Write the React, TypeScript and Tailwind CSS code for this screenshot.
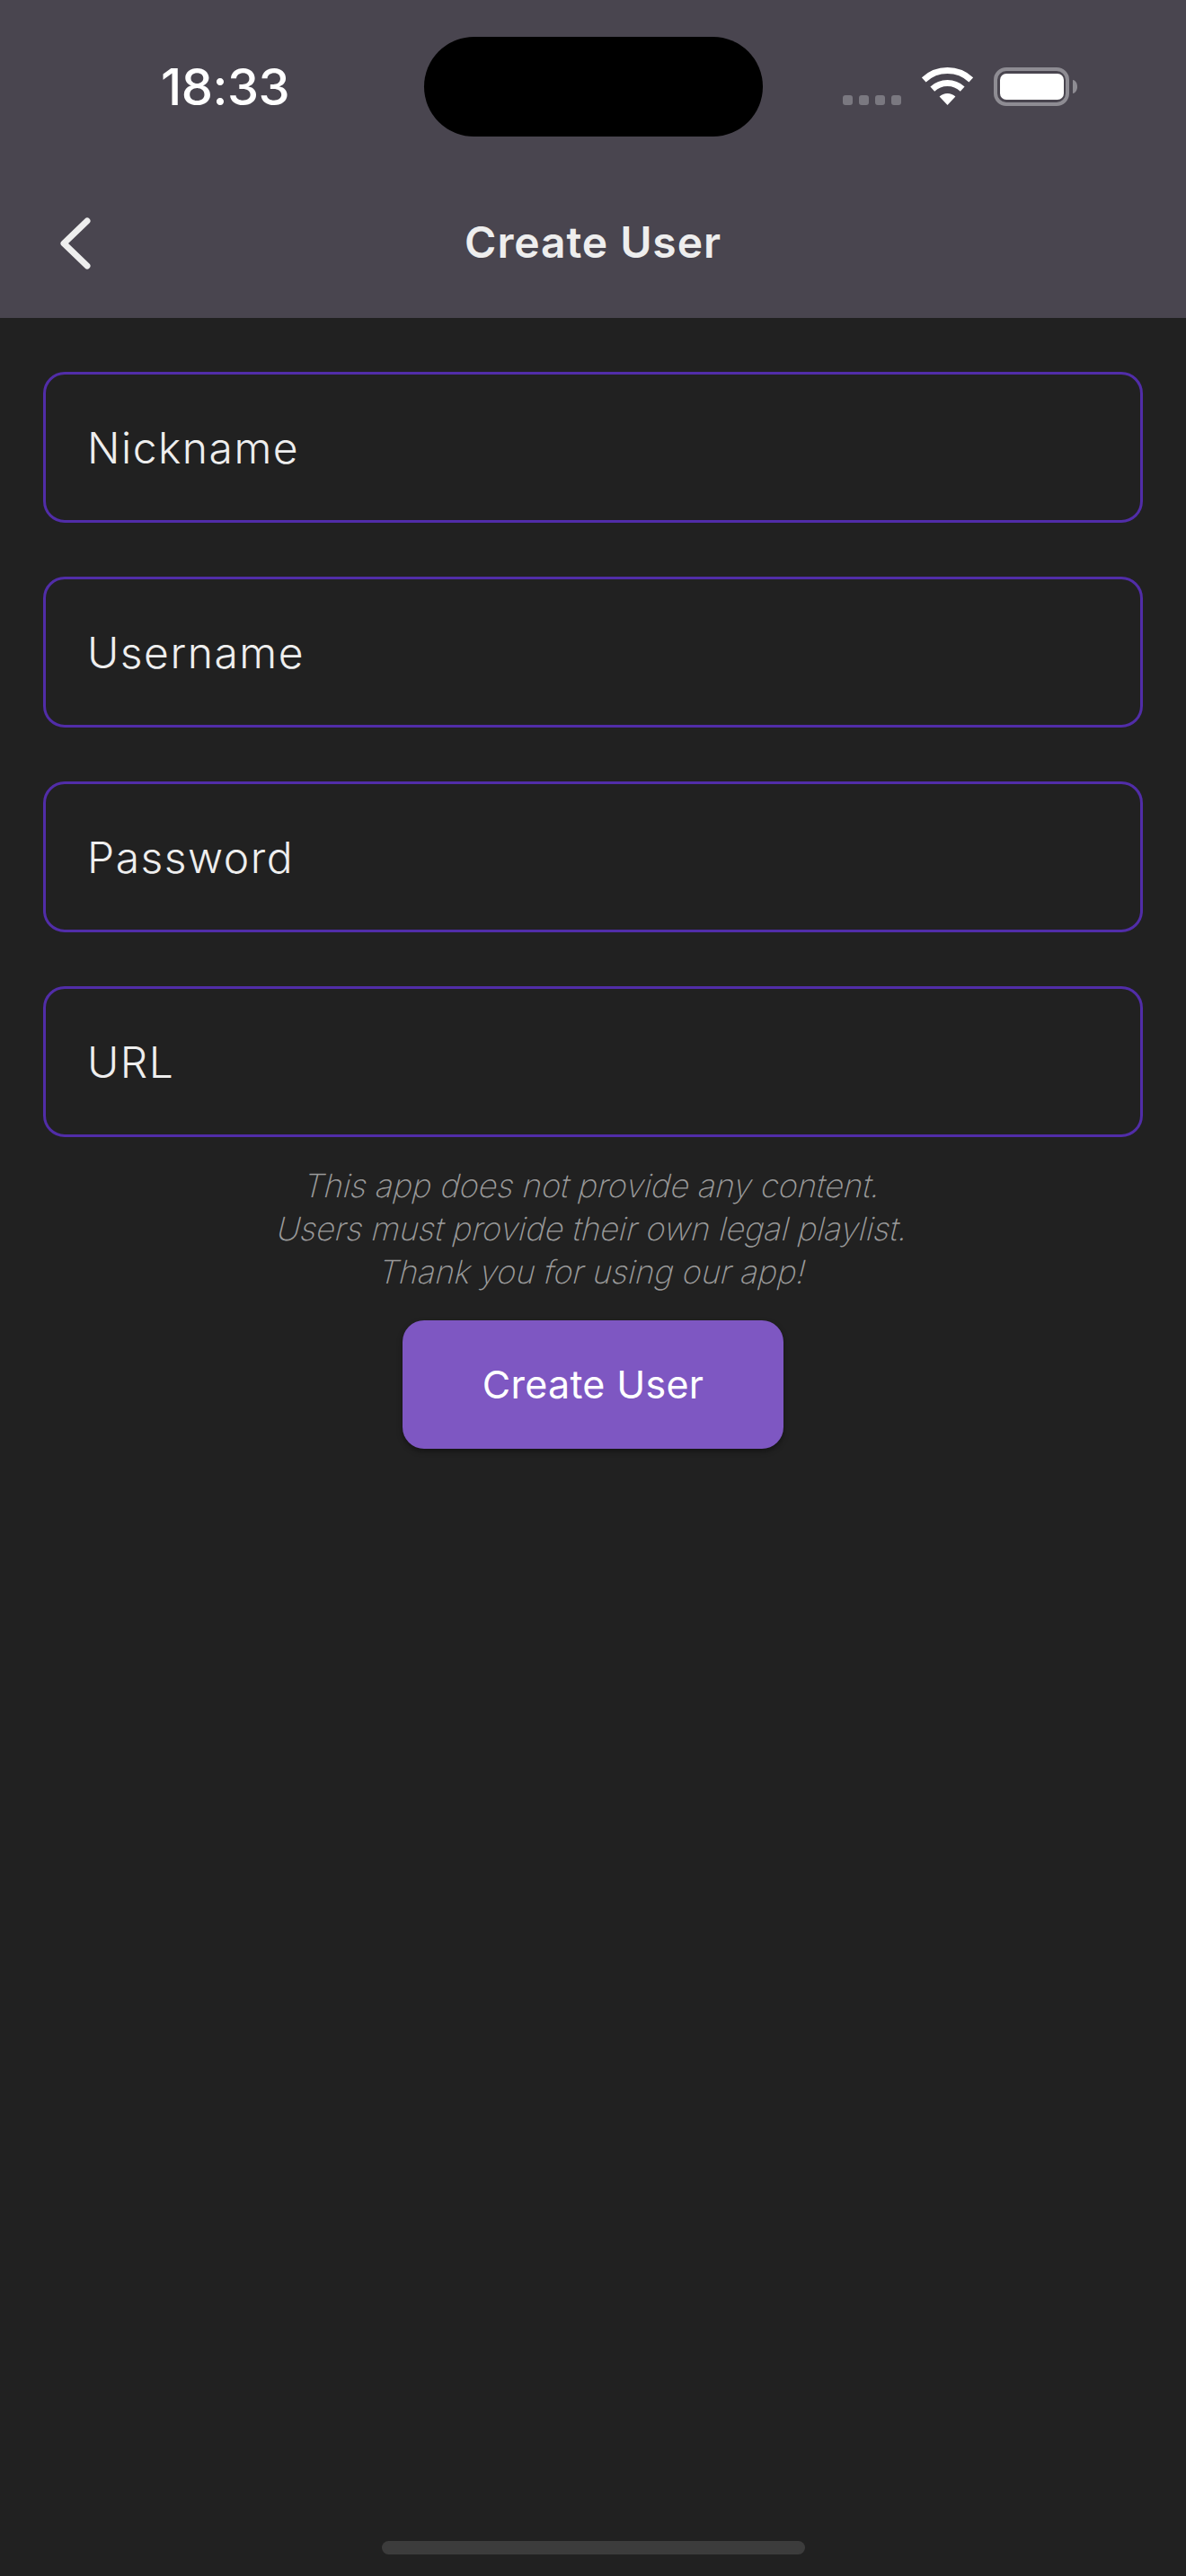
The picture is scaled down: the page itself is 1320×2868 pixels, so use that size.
const FIELDS = ["Nickname", "Username", "Password", "URL"];

const NOTE_LINES = [
  "This app does not provide any content.",
  "Users must provide their own legal playlist.",
  "Thank you for using our app!",
];

function WifiIcon() {
  return (
    <svg width="57" height="42" viewBox="0 0 57 42" fill="none">
      <path d="M2.2 13.9A38.5 38.5 0 0 1 54.8 13.9" stroke="#fff" strokeWidth="7" />
      <path d="M11.8 24.1A24.5 24.5 0 0 1 45.2 24.1" stroke="#fff" strokeWidth="7" />
      <path d="M19.6 32.5A13 13 0 0 1 37.4 32.5L28.5 42Z" fill="#fff" />
    </svg>
  );
}

function BatteryIcon() {
  return (
    <svg width="93" height="43" viewBox="0 0 93 43" fill="none">
      <rect x="2" y="2" width="80" height="39" rx="12" stroke="#8e8c93" strokeWidth="4" />
      <rect x="7" y="7" width="71" height="29" rx="7" fill="#fff" />
      <path d="M88 14c3 .5 5 3.500 5 7.500s-2 7-5 7.500Z" fill="#8e8c93" />
    </svg>
  );
}

function BackIcon() {
  return (
    <svg width="34" height="58" viewBox="0 0 34 58" fill="none">
      <path d="M30 4 4 29l26 25" stroke="#eeeeee" strokeWidth="7" strokeLinecap="round" strokeLinejoin="round" />
    </svg>
  );
}

function StatusBar() {
  return (
    <div className="flex h-[194px] pt-[41px]">
      <div className="w-[472px] pl-[179px] pt-[29px]">
        <span className="block text-[56px] leading-[54px] font-medium text-white tracking-[-0.5px]">18:33</span>
      </div>
      <div className="w-[377px] h-[111px] rounded-full bg-black" />
      <div className="flex items-start pl-[89px]">
        <div className="flex gap-[7px] mt-[65px]">
          {[0, 1, 2, 3].map((i) => (
            <span key={i} className="w-[11px] h-[11px] rounded-[3px] bg-[#7a7880]" />
          ))}
        </div>
        <div className="ml-[23px] mt-[34px]">
          <WifiIcon />
        </div>
        <div className="ml-[23px] mt-[34px]">
          <BatteryIcon />
        </div>
      </div>
    </div>
  );
}

export default function App() {
  return (
    <div
      className="flex flex-col w-[1320px] h-[2868px] bg-[#212121] overflow-hidden"
      style={{ fontFamily: "Inter, sans-serif" }}
    >
      <header className="h-[354px] bg-[#49454f] shrink-0">
        <StatusBar />
        <div className="relative flex items-center justify-center h-[152px]">
          <button className="absolute left-[67px] top-[48px] flex">
            <BackIcon />
          </button>
          <h1 className="text-[48px] leading-none font-semibold text-[#eeeeee] tracking-[0.9px]">Create User</h1>
        </div>
      </header>

      <main className="flex-1 flex flex-col items-center px-[48px] pt-[60px]">
        <div className="w-full flex flex-col gap-[60px]">
          {FIELDS.map((field) => (
            <div
              key={field}
              className="flex items-center h-[168px] rounded-[24px] border-[3px] border-[#512da8] pl-[46px] pt-[2px]"
            >
              <span className="text-[48px] leading-none font-light text-[#eeeeee] tracking-[1.5px]">{field}</span>
            </div>
          ))}
        </div>

        <div className="mt-[30px] text-center">
          {NOTE_LINES.map((line) => (
            <p key={line} className="text-[36px] leading-[48px] -skew-x-[14deg] font-extralight text-[#9a9a9a]">
              {line}
            </p>
          ))}
        </div>

        <button className="mt-[30px] w-[424px] h-[143px] rounded-[24px] bg-[#7e57c2] text-white text-[43px] font-normal tracking-[0.3px] shadow-[0_3px_6px_rgba(0,0,0,0.4)]">
          Create User
        </button>
      </main>

      <div className="flex justify-center pb-[24px]">
        <div className="w-[471px] h-[15px] rounded-[8px] bg-[#3c3c3c]" />
      </div>
    </div>
  );
}
